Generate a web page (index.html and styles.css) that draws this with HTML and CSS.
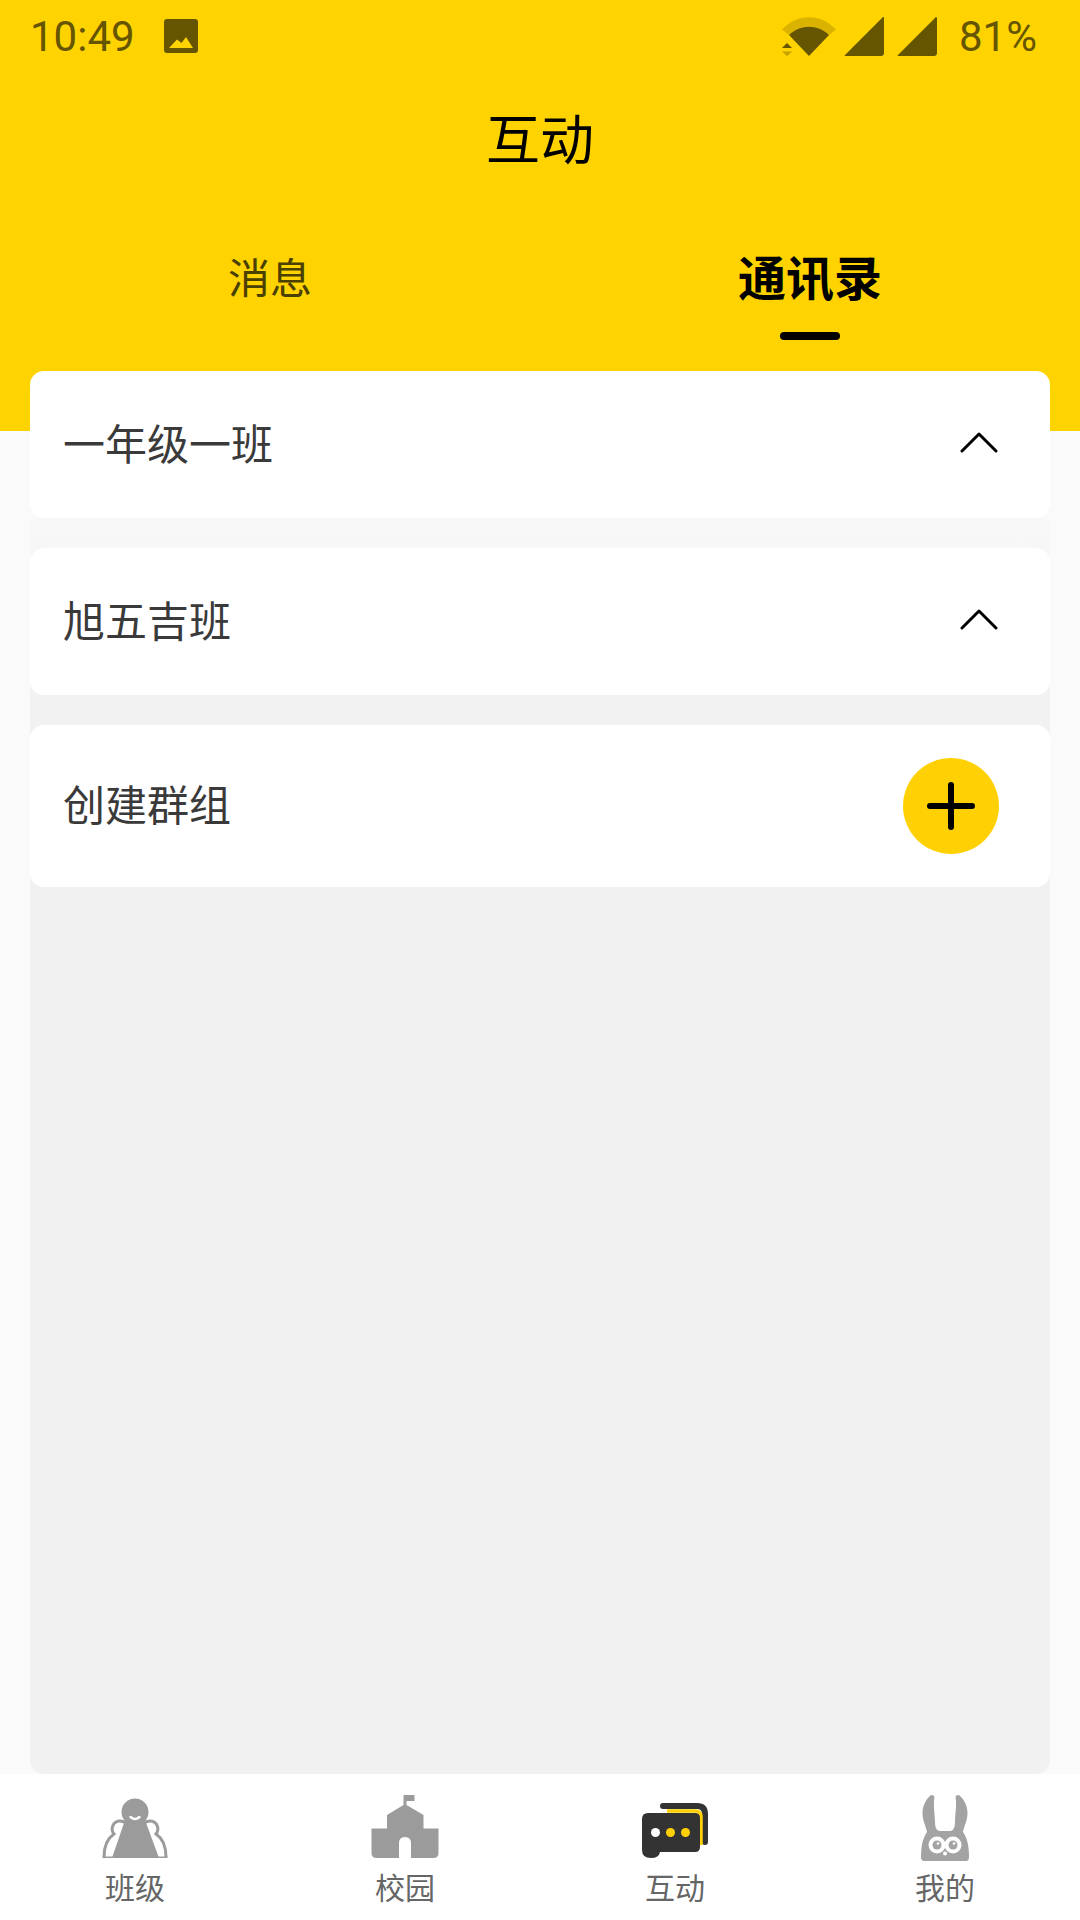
FILE: index.html
```html
<!DOCTYPE html>
<html lang="zh-CN">
  <head>
    <meta charset="UTF-8" />
    <meta name="viewport" content="width=device-width, initial-scale=1.0" />
    <title>互动</title>
    <link rel="stylesheet" href="styles.css">
  </head>
  <body>
    <div class="page">
      <div class="top">
        <div class="status-bar">
          <span class="status-time">10:49</span>
          <svg class="status-pic" width="34" height="34" viewBox="0 0 34 34">
            <path fill="#665500" fill-rule="evenodd" d="M3 0H31Q34 0 34 3V31Q34 34 31 34H3Q0 34 0 31V3Q0 0 3 0ZM5 29H29L22 18L17.500 24L13 20.500Z" />
          </svg>
          <span class="status-space"></span>
          <svg class="status-wifi" width="54" height="39" viewBox="0 0 54 39">
            <path fill="#665500" fill-opacity="0.25" d="M0 12.500C15 -4 39 -4 54 12.500L47 18C36 7 18 7 7 18Z" />
            <path fill="#665500" d="M7 18C18 7 36 7 47 18L27 39Z" />
            <path fill="#665500" d="M0 31H10L5 26Z" />
            <path fill="#665500" fill-opacity="0.4" d="M0 34.500H10L5 39Z" />
          </svg>
          <svg class="status-signal" width="40" height="39" viewBox="0 0 40 39">
            <path fill="#665500" d="M39 0Q40 0 40 1V36Q40 39 37 39H1Q0 39 1 38L38 1Q38.500 0 39 0Z" />
          </svg>
          <svg class="status-signal" width="40" height="39" viewBox="0 0 40 39">
            <path fill="#665500" d="M39 0Q40 0 40 1V36Q40 39 37 39H1Q0 39 1 38L38 1Q38.500 0 39 0Z" />
          </svg>
          <span class="status-battery">81%</span>
        </div>

        <div class="title">互动</div>

        <div class="tabs">
          <div class="tab">消息</div>
          <div class="tab tab-active">
            通讯录
            <span class="tab-line"></span>
          </div>
        </div>
      </div>

      <div class="list">
        <div class="card card-first">
          <span class="card-name">一年级一班</span>
          <svg class="chevron" width="38" height="22" viewBox="0 0 38 22">
            <path d="M2 20L19 3L36 20" />
          </svg>
        </div>

        <div class="panel">
          <div class="card">
            <span class="card-name">旭五吉班</span>
            <svg class="chevron" width="38" height="22" viewBox="0 0 38 22">
              <path d="M2 20L19 3L36 20" />
            </svg>
          </div>
          <div class="card card-create">
            <span class="card-name">创建群组</span>
            <div class="add-btn">
              <svg width="48" height="48" viewBox="0 0 48 48">
                <path d="M3 24H45M24 3V45" />
              </svg>
            </div>
          </div>
        </div>
      </div>

      <nav class="navbar">
        <div class="nav-item">
          <svg width="72" height="66" viewBox="0 0 72 66">
            <path fill="none" stroke="#9b9b9b" stroke-width="3" d="M5 62C5 50 9 43 15 39C11 34 14 26 21 26C24 26 26 27 28 29M67 62C67 50 63 43 57 39C61 34 58 26 51 26C48 26 46 27 44 29" />
            <path fill="#9b9b9b" d="M3.500 61.500H68.500V63H3.500Z" />
            <circle cx="36" cy="17" r="13.500" fill="#9b9b9b" />
            <path fill="#9b9b9b" d="M26 25Q36 31 46 25L60 63H13Z" />
            <path fill="none" stroke="#fff" stroke-width="2.500" stroke-linecap="round" d="M31.500 22Q36 26 40.500 22" />
          </svg>
          <span>班级</span>
        </div>
        <div class="nav-item">
          <svg width="72" height="66" viewBox="0 0 72 66">
            <path fill="#9b9b9b" d="M34.500 0H45.500V6H37.500V10L54.500 20V33.500H69.500V58Q69.500 63 64.500 63H42V48Q42 42 36 42Q30 42 30 48V63H7.500Q2.500 63 2.500 58V33.500H18V20L34.500 10Z" />
          </svg>
          <span>校园</span>
        </div>
        <div class="nav-item">
          <svg width="72" height="66" viewBox="0 0 72 66">
            <path fill="none" stroke="#333" stroke-width="6" stroke-linecap="round" d="M24 11H58Q66 11 66 19V47" />
            <path fill="none" stroke="#ffd105" stroke-width="3.500" d="M28 16H56Q62 16 62 22V50" />
            <path fill="#333" d="M9 18H56Q61 18 61 23V52Q61 57 56 57H21Q20 63 12 63Q3 63 3 55V24Q3 18 9 18Z" />
            <circle cx="16.500" cy="37.500" r="4.500" fill="#fff" />
            <circle cx="31.500" cy="37.500" r="4.500" fill="#ffd105" />
            <circle cx="46.500" cy="37.500" r="4.500" fill="#ffd105" />
          </svg>
          <span>互动</span>
        </div>
        <div class="nav-item">
          <svg width="72" height="66" viewBox="0 0 72 66">
            <path fill="#a3a3a3" d="M22 0C16 5 13.500 12 13.500 18C13.500 26 17 31 18 37C14 43 12 50 12 62Q12 66 15 66H57Q60 66 60 62C60 50 58 43 54 37C55 31 58.500 26 58.500 18C58.500 12 56 5 50 0Q46.500 0 46.500 2C48 10 46 20 46 27C46 33 44 36 41 36H31C28 36 26 33 26 27C26 20 24 10 25.500 2Q25.500 0 22 0Z" />
            <circle cx="28" cy="50" r="8.500" fill="#fff" />
            <circle cx="44" cy="50" r="8.500" fill="#fff" />
            <circle cx="28" cy="50" r="4.500" fill="#a3a3a3" />
            <circle cx="44" cy="50" r="4.500" fill="#a3a3a3" />
            <circle cx="29" cy="48.500" r="1.300" fill="#fff" />
            <circle cx="45" cy="48.500" r="1.300" fill="#fff" />
            <circle cx="36" cy="58.500" r="2" fill="#fff" />
          </svg>
          <span>我的</span>
        </div>
      </nav>
    </div>
  </body>
</html>
```

FILE: styles.css
```css
* {
  margin: 0;
  padding: 0;
  box-sizing: border-box;
}

:root {
  --primary: #ffd300;
  --status: #665500;
  --text-color: #3a3a3a;
  --side-bg: #fafafa;
  --radius: 14px;
}

body {
  background-color: var(--side-bg);
  color: var(--text-color);
  font-family: "Noto Sans CJK SC", "Noto Sans", sans-serif;
  overflow: hidden;
}

.page {
  height: 1920px;
  display: flex;
  flex-direction: column;
}

.top {
  height: 431px;
  flex: none;
  background: var(--primary);
}

.status-bar {
  height: 72px;
  padding: 0 43px 0 30px;
  display: flex;
  align-items: center;
  color: var(--status);
  font-family: Roboto, sans-serif;
  font-size: 42px;
}

.status-time {
  width: 134px;
}

.status-space {
  flex: 1;
}

.status-wifi {
  margin-right: -5px;
}

.status-signal {
  margin-left: 13px;
}

.status-battery {
  margin-left: 22px;
}

.title {
  margin-top: 29px;
  text-align: center;
  font-size: 54px;
  line-height: 72px;
  color: #000;
}

.tabs {
  margin-top: 69px;
  display: grid;
  grid-template-columns: 1fr 1fr;
}

.tab {
  display: flex;
  flex-direction: column;
  align-items: center;
  font-size: 42px;
  line-height: 68px;
  color: #4a4000;
}

.tab-active {
  font-size: 48px;
  line-height: 66px;
  font-weight: 700;
  color: #000;
}

.tab-line {
  width: 60px;
  height: 8px;
  margin-top: 24px;
  border-radius: 4px;
  background: #000;
}

.list {
  flex: 1;
  margin: -60px 30px 0;
  display: flex;
  flex-direction: column;
  min-height: 0;
}

.card {
  height: 147px;
  flex: none;
  padding: 0 53px 0 33px;
  display: flex;
  align-items: center;
  justify-content: space-between;
  background: #fff;
  border-radius: var(--radius);
  font-size: 42px;
}

.card-name {
  margin-top: -7px;
}

.card-create {
  height: 162px;
  padding-right: 51px;
}

.panel {
  flex: 1;
  padding-top: 30px;
  display: flex;
  flex-direction: column;
  gap: 30px;
  background: linear-gradient(#f8f8f8, #f1f1f1 200px);
  border-radius: 0 0 var(--radius) var(--radius);
}

.chevron {
  margin-right: -1px;
  margin-top: -5px;
  fill: none;
  stroke: #000;
  stroke-width: 3;
  stroke-linecap: round;
  stroke-linejoin: round;
}

.add-btn {
  width: 96px;
  height: 96px;
  display: flex;
  align-items: center;
  justify-content: center;
  border-radius: 50%;
  background: #ffd105;
}

.add-btn svg {
  fill: none;
  stroke: #000;
  stroke-width: 6;
  stroke-linecap: round;
}

.navbar {
  height: 146px;
  flex: none;
  display: grid;
  grid-template-columns: repeat(4, 1fr);
  background: #fff;
}

.nav-item {
  padding-top: 21px;
  display: flex;
  flex-direction: column;
  align-items: center;
  font-size: 30px;
  line-height: 40px;
  color: #666;
}

.nav-item svg {
  margin-bottom: 5px;
}
```
